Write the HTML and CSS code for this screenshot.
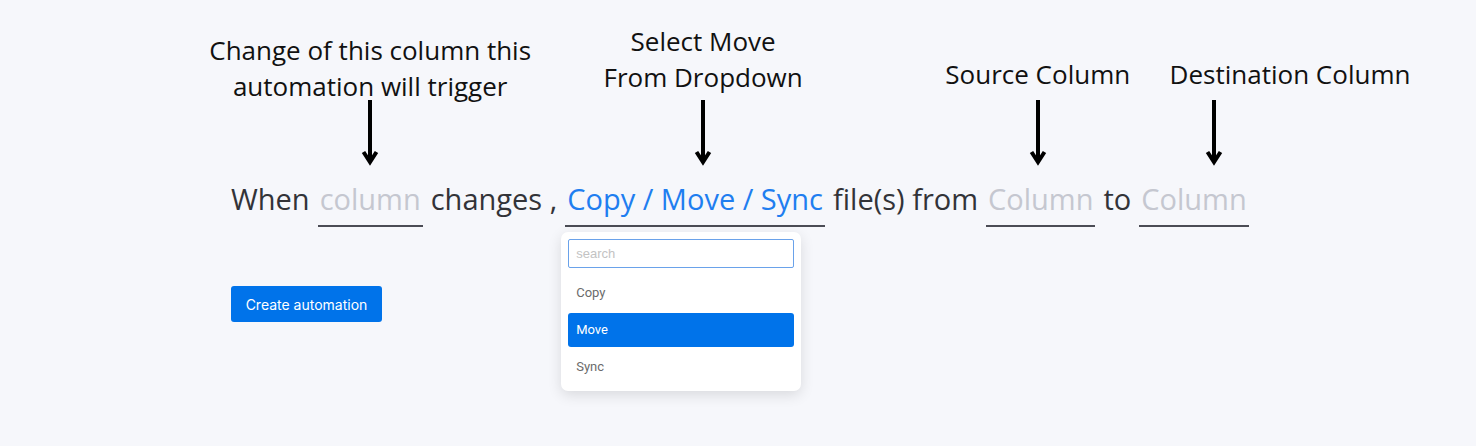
FILE: index.html
```html
<!DOCTYPE html>
<html lang="en">
<head>
    <meta charset="UTF-8">
    <meta name="viewport" content="width=device-width, initial-scale=1.0">
    <title>Automation recipe</title>
    <link rel="stylesheet" href="styles.css">
</head>
<body>
    <div class="page">
        <!-- Recipe sentence with annotated fields -->
        <div class="recipe">
            <span class="word">When</span>

            <div class="slot">
                <div class="note note-trigger">
                    <span>Change of this column this<br>automation will trigger</span>
                </div>
                <svg class="arrow" width="18" height="66" viewBox="0 0 18 66">
                    <rect x="7" y="0" width="4" height="61" fill="#000"></rect>
                    <polyline points="2.5,52 9,62 15.5,52" fill="none" stroke="#000" stroke-width="4"></polyline>
                </svg>
                <span class="field placeholder">column</span>
            </div>

            <span class="word">changes ,</span>

            <div class="slot">
                <div class="note note-action">
                    <span>Select Move<br>From Dropdown</span>
                </div>
                <svg class="arrow arrow-action" width="18" height="66" viewBox="0 0 18 66">
                    <rect x="7" y="0" width="4" height="61" fill="#000"></rect>
                    <polyline points="2.5,52 9,62 15.5,52" fill="none" stroke="#000" stroke-width="4"></polyline>
                </svg>
                <span class="field selected">Copy / Move / Sync</span>

                <div class="dropdown">
                    <input type="text" class="search" placeholder="search">
                    <div class="option">Copy</div>
                    <div class="option active">Move</div>
                    <div class="option">Sync</div>
                </div>
            </div>

            <span class="word">file(s) from</span>

            <div class="slot">
                <div class="note note-source">
                    <span>Source Column</span>
                </div>
                <svg class="arrow arrow-source" width="18" height="66" viewBox="0 0 18 66">
                    <rect x="7" y="0" width="4" height="61" fill="#000"></rect>
                    <polyline points="2.5,52 9,62 15.5,52" fill="none" stroke="#000" stroke-width="4"></polyline>
                </svg>
                <span class="field placeholder">Column</span>
            </div>

            <span class="word">to</span>

            <div class="slot">
                <div class="note note-dest">
                    <span>Destination Column</span>
                </div>
                <svg class="arrow arrow-dest" width="18" height="66" viewBox="0 0 18 66">
                    <rect x="7" y="0" width="4" height="61" fill="#000"></rect>
                    <polyline points="2.5,52 9,62 15.5,52" fill="none" stroke="#000" stroke-width="4"></polyline>
                </svg>
                <span class="field placeholder">Column</span>
            </div>
        </div>

        <button type="button" class="create-btn">Create automation</button>
    </div>
</body>
</html>
```

FILE: styles.css
```css
body {
    margin: 0;
    background-color: #f6f7fb;
    font-family: "Open Sans", Arial, sans-serif;
    color: #323338;
}
.page {
    box-sizing: border-box;
    min-height: 100vh;
    padding: 23px 0 0 231px;
}

/* Sentence row */
.recipe {
    display: flex;
    align-items: flex-end;
    gap: 8px;
    font-size: 29px;
    line-height: 36px;
}
.word {
    padding-bottom: 10px;
    white-space: nowrap;
}
.slot {
    position: relative;
    display: flex;
    flex-direction: column;
    align-items: center;
}
.field {
    padding: 0 2px 8px;
    border-bottom: 2px solid #4b4c55;
    white-space: nowrap;
}
.placeholder {
    color: #c5c7d0;
}
.selected {
    color: #1f7ef0;
}

/* Annotations */
.note {
    width: 0;
    display: flex;
    justify-content: center;
    margin-bottom: 8px;
    font-size: 26px;
    line-height: 36px;
    color: #111;
    text-align: center;
    white-space: nowrap;
}
.note-trigger {
    margin-bottom: -4px;
}
.note-action {
    margin-bottom: 5px;
    transform: translateX(8px);
}
.note-source {
    transform: translateX(-3px);
}
.note-dest {
    transform: translateX(96px);
}
.arrow {
    display: block;
    margin-bottom: 15px;
}
.arrow-action {
    transform: translateX(8px);
}
.arrow-source {
    transform: translateX(-3px);
}
.arrow-dest {
    transform: translateX(20px);
}

/* Dropdown */
.dropdown {
    position: absolute;
    top: calc(100% + 5px);
    left: -4px;
    width: 226px;
    padding: 7px;
    background-color: #fff;
    border-radius: 7px;
    box-shadow: 0 4px 14px rgba(0, 0, 0, 0.12);
    display: flex;
    flex-direction: column;
    gap: 3px;
    font-family: Roboto, Arial, sans-serif;
}
.search {
    box-sizing: border-box;
    width: 100%;
    height: 29px;
    margin-bottom: 5px;
    padding: 0 7px;
    border: 1px solid #6aa2ea;
    border-radius: 2px;
    font-size: 13px;
    outline: none;
}
.search::placeholder {
    color: #c3c3c3;
}
.option {
    height: 34px;
    line-height: 34px;
    padding-left: 8px;
    font-size: 13px;
    color: #6b6b6b;
    border-radius: 3px;
}
.option.active {
    background-color: #0073ea;
    color: #fff;
}

.create-btn {
    margin-top: 59px;
    width: 151px;
    height: 36px;
    border: none;
    border-radius: 3px;
    background-color: #0073ea;
    color: #fff;
    font-family: Inter, Roboto, Arial, sans-serif;
    font-size: 14px;
    cursor: pointer;
}
```
